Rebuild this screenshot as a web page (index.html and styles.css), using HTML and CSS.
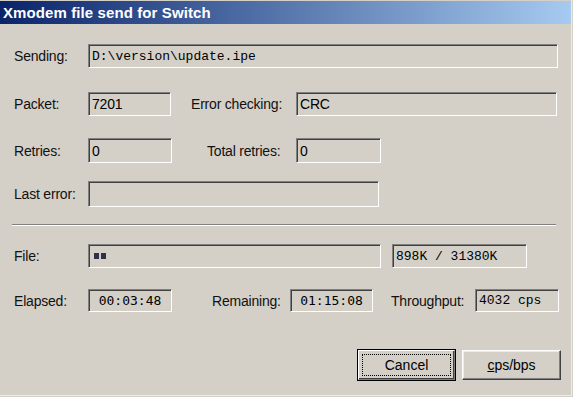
FILE: index.html
```html
<!doctype html>
<html lang="en">

<head>
    <meta charset="UTF-8" />
    <meta name="viewport" content="width=device-width, initial-scale=1.0" />
    <title>Xmodem file send for Switch</title>
    <link rel="stylesheet" href="styles.css">
</head>

<body>
    <div class="window">
        <div class="titlebar">Xmodem file send for Switch</div>

        <div class="content">
            <div class="row row-send">
                <span class="label">Sending:</span>
                <div class="field mono w-send">D:\version\update.ipe</div>
            </div>

            <div class="row row-packet">
                <span class="label">Packet:</span>
                <div class="field w-packet">7201</div>
                <span class="label label-check">Error checking:</span>
                <div class="field w-check">CRC</div>
            </div>

            <div class="row row-retries">
                <span class="label">Retries:</span>
                <div class="field w-retries">0</div>
                <span class="label label-total">Total retries:</span>
                <div class="field w-total">0</div>
            </div>

            <div class="row row-error">
                <span class="label">Last error:</span>
                <div class="field w-error"></div>
            </div>

            <div class="separator"></div>

            <div class="row row-file">
                <span class="label">File:</span>
                <div class="field w-file">
                    <span class="block"></span>
                    <span class="block"></span>
                </div>
                <div class="field mono w-size">898K / 31380K</div>
            </div>

            <div class="row row-time">
                <span class="label">Elapsed:</span>
                <div class="field clock w-elapsed">00:03:48</div>
                <span class="label label-remain">Remaining:</span>
                <div class="field clock w-remain">01:15:08</div>
                <span class="label label-through">Throughput:</span>
                <div class="field mono w-through">4032 cps</div>
            </div>

            <div class="buttons">
                <button class="btn btn-default"><span class="focus">Cancel</span></button>
                <button class="btn"><span><u>c</u>ps/bps</span></button>
            </div>
        </div>
    </div>
</body>

</html>
```

FILE: styles.css
```css
body {
    margin: 0;
    background: #d4d0c8;
    font-family: "Liberation Sans", Arial, sans-serif;
    font-size: 14px;
    letter-spacing: -0.2px;
    color: #111;
}

.window {
    width: 572px;
    height: 396px;
    box-sizing: border-box;
    padding-top: 1px;
    border-right: 1px solid #eeece6;
    border-bottom: 1px solid #eeece6;
}

.titlebar {
    height: 23px;
    line-height: 23px;
    padding-left: 3px;
    background: linear-gradient(to right, #0a246a, #a6caf0);
    color: #fff;
    font-weight: bold;
    font-size: 15px;
    letter-spacing: 0.1px;
}

.content {
    padding-left: 14px;
}

.row {
    display: flex;
    align-items: center;
    height: 24px;
}

.row-send {
    margin-top: 20px;
}

.row-packet {
    margin-top: 24px;
}

.row-retries {
    margin-top: 22px;
    height: 25px;
}

.row-error {
    margin-top: 18px;
    height: 26px;
}

.separator {
    width: 544px;
    margin: 17px 0 0 -2px;
    border-top: 1px solid #808080;
    border-bottom: 1px solid #fff;
}

.row-file {
    margin-top: 18px;
}

.row-time {
    margin-top: 21px;
    height: 23px;
}

.label {
    width: 74px;
    flex-shrink: 0;
}

.label-check {
    margin-left: 20px;
    width: 105px;
}

.label-total {
    margin-left: 35px;
    width: 89px;
}

.label-remain {
    margin-left: 40px;
    width: 78px;
}

.label-through {
    margin-left: 18px;
    width: 84px;
}

.field {
    box-sizing: border-box;
    height: 100%;
    display: flex;
    align-items: center;
    padding-left: 3px;
    border: 1px solid;
    border-color: #808080 #fff #fff #808080;
    box-shadow: inset 1px 1px #404040;
    color: #000;
    white-space: pre;
}

.mono {
    font-family: "Liberation Mono", "Courier New", monospace;
    font-size: 13px;
    letter-spacing: 0;
}

.clock {
    justify-content: center;
    padding-left: 0;
    font-family: "DejaVu Sans Mono", monospace;
    font-size: 13px;
    letter-spacing: 0;
}

.w-send { width: 470px; }
.w-packet { width: 83px; }
.w-check { width: 261px; }
.w-retries { width: 84px; }
.w-total { width: 85px; }
.w-error { width: 291px; }
.w-file { width: 293px; padding-left: 5px; gap: 2px; }
.w-size { width: 135px; margin-left: 11px; }
.w-elapsed { width: 84px; }
.w-remain { width: 83px; }
.w-through { width: 84px; }

.block {
    width: 5px;
    height: 6px;
    background: #303048;
}

.buttons {
    display: flex;
    justify-content: flex-end;
    gap: 7px;
    margin-top: 38px;
    padding-right: 10px;
}

.btn {
    width: 99px;
    height: 30px;
    padding: 0;
    background: #d4d0c8;
    font: inherit;
    color: #000;
    border: 1px solid;
    border-color: #fff #404040 #404040 #fff;
    box-shadow: inset -1px -1px #808080, inset 1px 1px #eceae4;
}

.btn-default {
    width: 97px;
    outline: 1px solid #000;
    border-color: #fff #808080 #808080 #fff;
    box-shadow: inset -1px -1px #404040;
}

.focus {
    display: block;
    margin: 0 3px;
    line-height: 20px;
    border: 1px dotted #000;
}
```
